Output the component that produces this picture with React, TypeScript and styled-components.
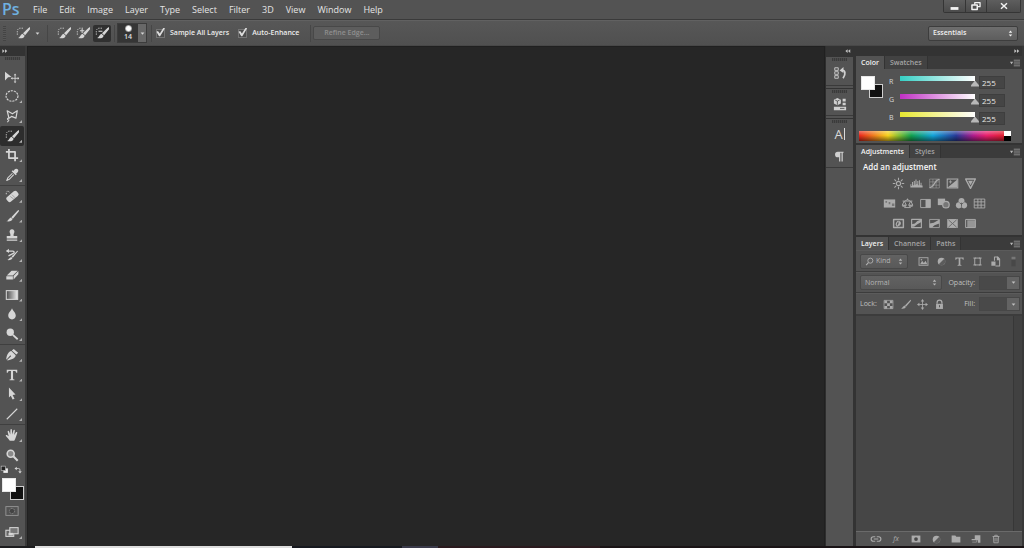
import React from "react";
import styled, { createGlobalStyle, css } from "styled-components";

const Global = createGlobalStyle`
  * { box-sizing: border-box; }
  html, body { margin: 0; background: #262626; }
  body, button, input, select {
    font-family: "Open Sans", "Noto Sans", sans-serif;
    font-size: 7px;
    line-height: 10px;
    color: #d6d6d6;
  }
  button { border: 0; padding: 0; background: none; }
  h2 { margin: 0; }
`;

const Frame = styled.div`
  display: flex;
  flex-direction: column;
  min-height: 100vh;
`;

/* ---------- menu bar ---------- */

const MenuBar = styled.header`
  display: flex;
  height: 20px;
  background: #535353;
  border-bottom: 1px solid #3a3a3a;
`;

const Logo = styled.div`
  width: 27px;
  padding-left: 2px;
  font-size: 16px;
  font-weight: 600;
  line-height: 18px;
  color: #6fb1e0;
`;

const Menus = styled.nav`
  display: flex;
  align-items: center;
  flex: 1;
`;

const MenuItem = styled.button`
  padding: 0 6px;
  font-size: 9px;
  line-height: 12px;
  color: #e4e4e4;
`;

const WindowControls = styled.div`
  display: flex;
  height: 13px;
  margin-right: 3px;
  border: 1px solid #353535;
  border-top: 0;
  border-radius: 0 0 2px 2px;
`;

const WindowButton = styled.button<{ $wide?: boolean }>`
  display: grid;
  place-items: center;
  width: ${(p) => (p.$wide ? 34 : 21)}px;
  background: linear-gradient(#5e5e5e, #4b4b4b);
  color: #f2f2f2;
  & + & { border-left: 1px solid #353535; }
`;

/* ---------- options bar ---------- */

const OptionsBar = styled.div`
  display: flex;
  align-items: center;
  height: 26px;
  padding: 0 6px 0 3px;
  background: linear-gradient(#575757, #505050);
  border-top: 1px solid #616161;
  border-bottom: 1px solid #484848;
`;

const Grip = styled.span`
  width: 3px;
  height: 15px;
  background: repeating-linear-gradient(#444 0 1px, #575757 1px 2px);
`;

const ToolPreset = styled.button`
  display: flex;
  align-items: center;
  gap: 5px;
  margin-left: 10px;
`;

const Separator = styled.span<{ $gap?: number }>`
  width: 1px;
  height: 17px;
  margin: 0 ${(p) => p.$gap ?? 7}px;
  background: #464646;
`;

const ModeButton = styled.button<{ $active?: boolean }>`
  display: grid;
  place-items: center;
  width: 18px;
  height: 17px;
  margin-right: 1px;
  border-radius: 2px;
  ${(p) => p.$active && css`background: #303030;`}
`;

const BrushPicker = styled.button`
  display: flex;
  height: 20px;
  border: 1px solid #3c3c3c;
`;

const BrushPreview = styled.span`
  display: flex;
  flex-direction: column;
  align-items: center;
  width: 20px;
  height: 18px;
  padding-top: 1px;
  background: #353535;
  font-weight: 600;
  line-height: 10px;
  color: #e0e0e0;
`;

const BrushDot = styled.span`
  width: 7px;
  height: 7px;
  flex: none;
  border-radius: 50%;
  background: radial-gradient(#fff 40%, #888 70%);
`;

const BrushArrow = styled.span`
  display: grid;
  place-items: center;
  width: 8px;
  height: 18px;
  background: #686868;
`;

const CheckLabel = styled.label`
  display: flex;
  align-items: center;
  gap: 5px;
  margin-right: 9px;
  font-weight: 600;
  color: #ececec;
`;

const CheckBox = styled.input`
  appearance: none;
  width: 9px;
  height: 9px;
  margin: 0;
  border: 1px solid #747474;
  background: #4c4c4c;
  &:checked::before {
    content: "";
    display: block;
    width: 9px;
    height: 9px;
    margin: -2px 0 0 -1px;
    background: #dcdcdc;
    clip-path: polygon(4% 48%, 22% 38%, 42% 66%, 82% 4%, 100% 8%, 46% 96%, 34% 96%);
  }
`;

const RefineButton = styled.button`
  width: 67px;
  height: 14px;
  border: 1px solid #484848;
  border-radius: 2px;
  background: #5d5d5d;
  font-weight: 600;
  color: #8e8e8e;
`;

const Spacer = styled.span`
  flex: 1;
`;

const SelectShell = styled.span<{ $width: number; $height: number; $dim?: boolean }>`
  display: grid;
  grid-template-columns: 1fr 10px;
  align-items: center;
  width: ${(p) => p.$width}px;
  height: ${(p) => p.$height}px;
  border: 1px solid ${(p) => (p.$dim ? "#484848" : "#3d3d3d")};
  border-radius: 2px;
  background: ${(p) => (p.$dim ? "linear-gradient(#626262, #595959)" : "linear-gradient(#6e6e6e, #5d5d5d)")};
  color: ${(p) => (p.$dim ? "#b4b4b4" : "#f0f0f0")};
  svg { grid-area: 1 / 2; pointer-events: none; }
`;

const SelectField = styled.select<{ $indent?: number; $bold?: boolean }>`
  grid-area: 1 / 1 / 2 / 3;
  appearance: none;
  width: 100%;
  border: 0;
  padding: 0 0 0 ${(p) => p.$indent ?? 4}px;
  background: none;
  font-weight: ${(p) => (p.$bold ? 600 : 400)};
  color: inherit;
`;

const SelectBadge = styled.span`
  grid-area: 1 / 1;
  padding-left: 4px;
  line-height: 0;
`;

/* ---------- work area ---------- */

const WorkArea = styled.div`
  display: flex;
  flex: 1;
`;

const Canvas = styled.main`
  flex: 1;
  background: #262626;
  border: 1px solid #202020;
  border-bottom: 0;
`;

const CollapseStrip = styled.button<{ $right?: boolean }>`
  display: flex;
  align-items: center;
  justify-content: ${(p) => (p.$right ? "flex-end" : "flex-start")};
  flex: none;
  height: 10px;
  width: 100%;
  padding: 0 2px;
  background: #333;
  color: #c4c4c4;
`;

const ToolColumn = styled.aside`
  display: flex;
  flex-direction: column;
  align-items: center;
  width: 27px;
  background: #535353;
  border-right: 2px solid #3a3a3a;
`;

const PanelGrip = styled.span<{ $space?: number }>`
  flex: none;
  width: 15px;
  height: 3px;
  margin: 1px auto ${(p) => p.$space ?? 0}px;
  background: repeating-linear-gradient(90deg, #3b3b3b 0 1px, #4a4a4a 1px 2px);
`;

const ToolGroup = styled.div<{ $height: number }>`
  display: grid;
  grid-auto-rows: 1fr;
  flex: none;
  width: 100%;
  height: ${(p) => p.$height}px;
  & + & { border-top: 1px solid #3f3f3f; }
`;

const ToolButton = styled.button<{ $active?: boolean; $corner?: boolean }>`
  position: relative;
  display: grid;
  place-items: center;
  width: 24px;
  min-height: 18px;
  border-radius: 2px;
  ${(p) => p.$active && css`background: #2d2d2d;`}
  ${(p) =>
    p.$corner &&
    css`
      &::after {
        content: "";
        position: absolute;
        right: 2px;
        bottom: 3px;
        width: 3px;
        height: 3px;
        background: #b0b0b0;
        clip-path: polygon(100% 0, 100% 100%, 0 100%);
      }
    `}
`;

const SwatchTools = styled.div`
  display: flex;
  justify-content: space-between;
  width: 100%;
  padding-right: 3px;
`;

const ColorPair = styled.div<{ $top?: number }>`
  position: relative;
  flex: none;
  width: 22px;
  height: 22px;
  margin-top: ${(p) => p.$top ?? 0}px;
`;

const Chip = styled.button<{ $back?: boolean }>`
  position: absolute;
  width: 14px;
  height: 14px;
  ${(p) =>
    p.$back
      ? css`right: 0; bottom: 0; background: #111; border: 1px solid #cfcfcf;`
      : css`left: 0; top: 0; background: #fff; border: 1px solid #e8e8e8;`}
`;

/* ---------- icon dock ---------- */

const Dock = styled.aside`
  display: flex;
  flex-direction: column;
  width: 30px;
  background: #535353;
  border-left: 1px solid #2e2e2e;
  border-right: 2px solid #333;
`;

const DockGroup = styled.div<{ $height: number }>`
  display: flex;
  flex-direction: column;
  height: ${(p) => p.$height}px;
  border-top: 1px solid #333;
  border-bottom: 1px solid #3a3a3a;
  & + & { margin-top: 2px; }
`;

const DockButton = styled.button`
  display: grid;
  place-items: center;
  flex: 1;
  color: #d0d0d0;
`;

const CharacterMark = styled.span`
  padding-right: 1px;
  border-right: 1px solid #dadada;
  font-size: 13px;
  line-height: 12px;
  color: #dadada;
`;

/* ---------- panels ---------- */

const Panels = styled.aside`
  display: flex;
  flex-direction: column;
  width: 169px;
  background: #333;
  border-right: 2px solid #383838;
`;

const Panel = styled.section<{ $grow?: boolean }>`
  display: flex;
  flex-direction: column;
  flex: ${(p) => (p.$grow ? "1" : "none")};
  margin-left: 1px;
  background: #535353;
  & + & { margin-top: 2px; }
`;

const TabBar = styled.div`
  display: flex;
  height: 13px;
  background: #3b3b3b;
`;

const Tab = styled.button<{ $active?: boolean }>`
  padding: 0 5px 0 5px;
  border-right: 1px solid #333;
  background: ${(p) => (p.$active ? "#535353" : "#424242")};
  font-weight: 600;
  color: ${(p) => (p.$active ? "#f2f2f2" : "#a4a4a4")};
`;

const PanelMenu = styled.button`
  margin-left: auto;
  padding-right: 2px;
  line-height: 0;
  color: #b8b8b8;
`;

const ColorBody = styled.div`
  display: grid;
  grid-template-columns: 22px 1fr;
  column-gap: 6px;
  height: 74px;
  padding: 4px 11px 2px 5px;
`;

const Channels = styled.div`
  display: grid;
  grid-auto-rows: 18px;
  align-items: center;
`;

const ChannelRow = styled.label`
  display: grid;
  grid-template-columns: 11px 79px 26px;
  align-items: center;
  color: #d8d8d8;
`;

const ChannelSlider = styled.input<{ $from: string }>`
  appearance: none;
  width: 79px;
  height: 12px;
  margin: 0 0 1px;
  background: linear-gradient(90deg, ${(p) => p.$from}, #fff) no-repeat 0 0 / 75px 5px;
  &::-webkit-slider-runnable-track { height: 12px; }
  &::-webkit-slider-thumb {
    appearance: none;
    width: 8px;
    height: 6px;
    margin-top: 5px;
    background: #b8b8b8;
    clip-path: polygon(50% 0, 100% 80%, 100% 100%, 0 100%, 0 80%);
  }
`;

const ChannelValue = styled.input`
  width: 26px;
  height: 13px;
  padding: 0 0 0 2px;
  border: 1px solid #3e3e3e;
  background: #454545;
  font-size: 8px;
  color: #e6e6e6;
`;

const Spectrum = styled.div`
  grid-column: 1 / 3;
  align-self: end;
  display: grid;
  grid-template-columns: 1fr 7px;
  height: 10px;
  margin-left: -2px;
`;

const Hues = styled.span`
  grid-row: 1 / 3;
  background:
    linear-gradient(rgba(255, 255, 255, 0.35), rgba(255, 255, 255, 0) 45%, rgba(0, 0, 0, 0.5)),
    linear-gradient(90deg, #e8251c, #f5d21c 20%, #8cc030 27%, #12a04e 36%, #12a3d8 51%, #283a98 67%, #b01c8c 79%, #e8206c 88%, #e02030);
`;

const EndStop = styled.span<{ $dark?: boolean }>`
  background: ${(p) => (p.$dark ? "#000" : "#fff")};
`;

const AdjustBody = styled.div`
  height: 77px;
  padding: 3px 7px;
`;

const AdjustTitle = styled.h2`
  font-size: 8px;
  font-weight: 600;
  line-height: 12px;
  color: #f8f8f8;
`;

const IconRow = styled.div`
  display: flex;
  justify-content: center;
  align-items: center;
  gap: 4px;
  height: 20px;
  margin-left: -10px;
`;

const IconButton = styled.button`
  display: grid;
  place-items: center;
  width: 14px;
  height: 14px;
  color: #ababab;
`;

const LayerRow = styled.div<{ $height: number }>`
  display: flex;
  align-items: center;
  height: ${(p) => p.$height}px;
  padding: 0 2px 0 4px;
  border-bottom: 1px solid #3c3c3c;
  border-top: 1px solid #5b5b5b;
  color: #c0c0c0;
`;

const FilterIcons = styled.div`
  display: flex;
  gap: 4px;
  margin-left: 8px;
`;

const LockIcons = styled.div`
  display: flex;
  gap: 3px;
  margin-left: 5px;
`;

const FieldLabel = styled.label`
  display: flex;
  align-items: center;
  gap: 4px;
  margin-left: auto;
`;

const AmountShell = styled.span`
  display: grid;
  grid-template-columns: 27px 12px;
  height: 14px;
  border: 1px solid #474747;
`;

const AmountInput = styled.input`
  width: 27px;
  height: 12px;
  border: 0;
  background: #494949;
`;

const AmountArrow = styled.span`
  display: grid;
  place-items: center;
  background: #636363;
`;

const LayerList = styled.div`
  display: grid;
  grid-template-columns: 1fr 9px;
  flex: 1;
  background: #464646;
  border-top: 1px solid #3c3c3c;
  border-bottom: 1px solid #6a6a6a;
`;

const ScrollTrack = styled.span`
  grid-column: 2;
  background: #414141;
  border-left: 1px solid #373737;
`;

const LayerFooter = styled.div`
  display: flex;
  align-items: center;
  gap: 6px;
  height: 14px;
  padding-left: 13px;
`;

const DesktopEdge = styled.footer`
  height: 2px;
  background: linear-gradient(
    90deg,
    #1c1c1e 35px, #dedede 35px 292px, #17191f 292px 402px, #3a3a4a 402px 438px, #2a1a1e 438px 600px, #1a1416 600px
  );
`;

/* ---------- drawings ---------- */

type Drawing = React.ReactNode;

const line = (d: string, width = 1.2) => (
  <path d={d} fill="none" stroke="currentColor" strokeWidth={width} strokeLinejoin="round" />
);
const solid = (d: string) => <path d={d} fill="currentColor" />;

const brushStroke = solid("M16 1.200c.8.8.6 1.600.1 2.300L10.400 10.600 8 8.400 14.200 2.200zM7.400 8.800l2.500 2.300c-.4 2.600-3.400 3.400-7.600 2.600 2.500-.5 2.400-3.800 5.100-4.900z");

const quickSelect = (
  <>
    <path d="M1.500 10V6Q2 2.500 5 2.500H9" fill="none" stroke="currentColor" strokeWidth="1" strokeDasharray="1.500 1.200" />
    {brushStroke}
  </>
);

const art: Record<string, Drawing> = {
  move: (
    <>
      {solid("M0 2l7.500 6-4 .4L0 12z")}
      {line("M11.500 5.500v8M7.500 9.500h8", 1)}
      {solid("M11.500 4l1.500 2h-3zM11.500 15l1.500-2h-3zM6.500 9.500l2-1.500v3zM16.500 9.500l-2-1.500v3z")}
    </>
  ),
  ellipse: <ellipse cx="8" cy="8" rx="6.800" ry="6" fill="none" stroke="currentColor" strokeWidth="1.300" strokeDasharray="2.400 1.100" />,
  lasso: <>{line("M4.500 10.500L2.500 2l6 3.500L14 2l-1.500 8.500-5-2-3 2z", 1.4)}{line("M4.500 10.500c-2-.5-2.500 2 0 2-.5 1-1 2-2 2.500", 1.2)}</>,
  quick: quickSelect,
  quickAdd: <>{quickSelect}{line("M7 3v5M4.500 5.500h5", 1.2)}</>,
  quickSubtract: <>{quickSelect}{line("M4 6h4.500", 1.2)}</>,
  crop: line("M4.500 1v10.500H15M1 4.500h10.500V15", 2),
  dropper: <>{solid("M14.500 1.500c1.200 1.200.8 2.800-.5 3.800l-1.300 1 .8.8-1.300 1.300-4.600-4.600L8.900 2.500l.8.8 1-1.200c1-1.300 2.600-1.800 3.800-.6z")}{line("M8.500 6L3.200 11.300 2 14.200l2.800-1.300L10 7.600", 1.2)}</>,
  heal: <>
    <path d="M5 3.500C3 1.500 1 3 1.500 6" fill="none" stroke="currentColor" strokeWidth="1" strokeDasharray="1.500 1" />
    <rect x="1" y="5" width="15" height="7" rx="2.500" transform="rotate(-40 8.500 8.500)" fill="currentColor" />
    <path d="M6 8.500l4 3M8 6.500l3.500 3.500" stroke="#8a8a8a" strokeWidth=".8" />
  </>,
  brush: solid("M15.500 1.200c.8.7.6 1.300 0 2L9 11 7.200 9.400 14.200 2zM6.600 9.600l2 1.800c-.4 2.400-3.400 3.200-7.100 2.600 2.400-.6 2.700-3.400 5.100-4.400z"),
  stamp: solid("M8 1.500a2.800 2.800 0 012.400 4.200C9.700 7 9.700 8 9.900 9H14v3H2V9h4.100c.2-1 .2-2-.5-3.300A2.800 2.800 0 018 1.500zM2 13h12v1.500H2z"),
  history: <>{solid("M15 3.500L9 11 7.500 9.800 14 3zM7 10.200l1.500 1.300c-.5 2-3 2.700-6 2.300 2-.5 2.500-3 4.500-3.600z")}{line("M2 3.500h7c2 0 2 2.500 0 3L4 9", 1.5)}{solid("M4.500.8v5L1 3.400z")}</>,
  eraser: <>{solid("M7.500 3h7L9 8.500H2zM9.800 9.200L15.300 3.500V7L9.800 13zM1.500 9.300H9V13H1.500z")}</>,
  gradient: <>
    <defs><linearGradient id="toolFade"><stop stopColor="#4a4a4a" /><stop offset="1" stopColor="#eee" /></linearGradient></defs>
    <rect x="1.500" y="3" width="13" height="10" fill="url(#toolFade)" stroke="currentColor" strokeWidth="1.200" />
  </>,
  blur: solid("M8 1.500c1 3 4.300 4.800 4.300 8.300A4.300 4.300 0 018 14.300a4.300 4.300 0 01-4.300-4.500C3.700 6.300 7 4.500 8 1.500z"),
  dodge: <><circle cx="6" cy="6" r="4.200" fill="currentColor" />{line("M9 9l5.500 5", 2)}</>,
  pen: <>{solid("M10 1l5 4.500-2 2L7.800 2.800zM7.200 3.500l5 4.800c-.2 3-3.500 4.800-9.200 6l-.6-.5L7 9.300 6.200 8.400 1.800 13l-.4-.5c.8-5 2.800-8.700 5.800-9z")}</>,
  type: solid("M2 2h12v3.500h-1.200c-.2-1.500-.8-2-2-2H9.200v8.600c0 .9.500 1 1.600 1.100V14H5.200v-.8c1.100-.1 1.600-.2 1.600-1.100V3.500H5.200c-1.200 0-1.800.5-2 2H2z"),
  arrow: solid("M4.500.500l7.500 8-3.300.5 2.200 4.400-2.200 1-2.100-4.500-2.100 2z"),
  line: line("M2 14L14 2", 1.3),
  hand: solid("M5.500 14.500C4 12.500 2.500 10.500 1 9c-.6-1 .8-1.500 1.500-.8L4.200 9.500 3 4.200c0-1.100 1.300-1.300 1.700-.2L6 7.500 6.200 2c.1-1.200 1.600-1.200 1.700 0l.3 5.300 1.500-4.700c.4-1.100 1.700-.8 1.600.3l-.8 5 2-3c.6-.9 1.900-.3 1.500.8-.9 2.600-1.500 5-2.500 7.200l-1 1.600z"),
  zoom: <><circle cx="6.500" cy="6.500" r="4" fill="#8a8a8a" stroke="currentColor" strokeWidth="1.800" />{line("M9.500 9.500l5 5", 2.4)}</>,
  mask: <><rect x="1" y="3" width="14" height="10" fill="none" stroke="#999" /><circle cx="8" cy="8" r="3" fill="#444" stroke="#999" strokeDasharray="1 .8" /></>,
  screen: <><rect x="1" y="6" width="9" height="7" fill="#666" stroke="currentColor" strokeWidth="1.200" /><rect x="5.500" y="3" width="9.500" height="7" fill="#777" stroke="currentColor" strokeWidth="1.200" />{solid("M4 9h5v3H4z")}</>,
  reset: <><rect x="6" y="6" width="8" height="8" fill="#eee" /><rect x="2" y="2" width="8" height="8" fill="#222" stroke="#ddd" /></>,
  swap: <>{line("M4 5h5.500Q12 5 12 8v3", 1.6)}{solid("M1 5l4.500-3.500v7zM12 15l-3.500-4.500h7z")}</>,
  panelHistory: <>{line("M2 2h4v3H2zM2 6.500h4v3H2zM2 11h4v3H2z", 1)}{line("M10 5c4-1 5 4 1.500 9", 2)}{solid("M7.500 5L12 1v7z")}</>,
  properties: <>{solid("M1 3l4-2 4 2v4.500L5 9.500l-4-2zM11 2h3.500v3H11zM11 6.500h3.500v3H11zM1 11h14v4H1z")}<path d="M5 4.500V9M2.500 3.500L5 4.700l2.500-1.200M8 13h5" stroke="#535353" fill="none" /></>,
  paragraph: solid("M6 2h7v1.500h-1V14h-1.500V3.500H9V14H7.500V9H6a3.500 3.500 0 010-7z"),
  sun: <><circle cx="8" cy="8" r="2.600" fill="none" stroke="currentColor" strokeWidth="1.400" />{line("M8 1v3M8 12v3M1 8h3M12 8h3M3 3l2 2M11 11l2 2M13 3l-2 2M5 11l-2 2", 1.3)}</>,
  levels: solid("M.5 13V9h1.200v2h.8V6h1.300v4h.9V5h1.200v4.500h.8V3H8v6h1V5h1.200v5h.8V4h1.200v6h.8V7h1.200v3.500h1.300V13z"),
  curves: <>{line("M2 2.500h12v11H2zM6 2.500v11M10 2.500v11M2 6h12M2 10h12", 0.6)}{line("M2 13C9 12 7 4 14 3", 1.6)}</>,
  exposure: <><rect x="1.500" y="2.500" width="13" height="11" fill="none" stroke="currentColor" strokeWidth="1.300" />{solid("M2 13L14 3v10z")}{line("M3.500 6h4M5.500 4v4", 1)}</>,
  vibrance: <>{line("M2 2.500h12L8 14z", 1.7)}{solid("M5 4.500h6L8 10z")}</>,
  hue: <>{solid("M1 3h14v10H1z")}<path d="M3 5h2v2H3zM7 6h2v3H7zM11 8h3v3h-3z" fill="#777" /></>,
  balance: <>{line("M8 2v2M2 5h12M4 5L1.500 10h5zM12 5l-2.500 5h5zM4 13h8M5 5l3-2 3 2", 1.2)}{solid("M1 10h6l-1 2H2zM9 10h6l-1 2h-4z")}</>,
  blackWhite: <>{line("M2 3h12v10H2z", 1.1)}{solid("M8 3h6v10H8z")}</>,
  photo: <>{solid("M1 2h9v8H1z")}<circle cx="11" cy="9.500" r="4" fill="#777" stroke="currentColor" strokeWidth="1.500" /></>,
  mixer: <><circle cx="8" cy="5" r="3.700" fill="currentColor" /><circle cx="4.800" cy="10.300" r="3.700" fill="currentColor" /><circle cx="11.200" cy="10.300" r="3.700" fill="currentColor" /><path d="M8 7v5M8 9L5.500 7M8 9l2.500-2" stroke="#555" /></>,
  lookup: line("M1.500 2.500h13v11h-13zM6 2.500v11M10 2.500v11M1.500 6h13M1.500 10h13", 1.1),
  invert: <>{line("M2 3h12v10H2z", 1.8)}{solid("M8 5c3 0 4 3 2 5l-5 3L8 8z")}{line("M6 11c-2-2 0-5 2-6", 1.5)}</>,
  posterize: <>{line("M2 3h12v10H2z", 1.4)}{solid("M2 9l4-1 3-3 5-2v3L9 9l-4 3H2z")}</>,
  threshold: <>{line("M2 3h12v10H2z", 1)}{solid("M2 8l5-1 7-4v5l-6 2-3 3H2z")}</>,
  selective: <>{solid("M1.500 2.500h13v11h-13z")}<path d="M3 3.500L8 8l5-4.500M3 12.500L8 8l5 4.500" stroke="#606060" fill="none" /></>,
  map: <>{line("M2 3h12v10H2z", 1.2)}<path d="M4 4h10v9H4z" fill="currentColor" opacity=".75" /></>,
  image: <><rect x="1.500" y="2.500" width="13" height="11" fill="none" stroke="currentColor" strokeWidth="1.300" />{solid("M3 12l3-5 2.500 3L11 7l2.500 5z")}<circle cx="5" cy="5.500" r="1.200" fill="currentColor" /></>,
  halfCircle: <><circle cx="8" cy="8" r="5.500" fill="currentColor" /><path d="M8 8l4-4a5.500 5.500 0 01-8 8z" fill="#5c5c5c" /></>,
  shape: line("M4 3h8v10H4zM2 3h4M10 3h4M2 13h4M10 13h4", 1.4),
  smart: <>{line("M6.500 7V1.500h5L14 4.500v10H8", 1.5)}{solid("M2 8h6v6H2zM10 1h1.500L14 4v2h-4z")}</>,
  toggle: <><rect x="5" y="1" width="6" height="14" fill="#484848" /><path d="M5 1h6v4H5z" fill="#777" /></>,
  checker: <>{line("M1.500 2h13v12h-13z", 1)}{solid("M2 2h4v4H2zM10 2h4v4h-4zM6 6h4v4H6zM2 10h4v4H2zM10 10h4v4h-4z")}</>,
  cross: <>{line("M8 3v10M3 8h10", 1.2)}{solid("M8 0l2.500 3.500h-5zM8 16l2.500-3.500h-5zM0 8l3.500-2.500v5zM16 8l-3.500-2.500v5z")}</>,
  lock: <>{line("M4.500 7V5a3.500 3.500 0 017 0v2", 1.8)}{solid("M3 7h10v7.500H3z")}<path d="M8 9v3" stroke="#555" strokeWidth="1.500" /></>,
  chain: <>{line("M7 5H4.500a3 3 0 000 6H7M9 5h2.500a3 3 0 010 6H9M5 8h6", 1.5)}</>,
  addMask: <>{solid("M1 2.500h14v11H1z")}<circle cx="8" cy="8" r="3" fill="#484848" /></>,
  folder: solid("M1 2.500h6l1.500 2H15v9H1z"),
  newLayer: <>{solid("M6 2h9v12h-4v-4H1V8h5z")}{line("M2 13h7v-3", 1)}</>,
  trash: line("M2.500 4h11M6 4V2h4v2M4 4l.5 10h7L12 4M6.500 6v6M9.500 6v6", 1.3),
  search: <><circle cx="9.500" cy="6.500" r="4.500" fill="none" stroke="currentColor" strokeWidth="1.500" />{line("M6 10l-4 4.500", 1.8)}</>,
  updown: solid("M8 1l4 5H4zM8 15l4-5H4z"),
  down: solid("M2 5h12L8 12z"),
  rewind: solid("M1 3v10l6-5zM8 3v10l6-5z"),
  rewindLeft: solid("M7 3v10L1 8zM14 3v10L8 8z"),
  menu: <>{solid("M0 6h5L2.500 10z")}{line("M6 3.500h10M6 6.500h10M6 9.500h10M6 12.500h10", 1)}</>,
  minimize: solid("M1 9h14v5H1z"),
  restore: <>{line("M6 6V2.500h8.500V9H11", 2)}{line("M1.500 6.500H10v7H1.500z", 2.4)}</>,
  close: line("M2 2.500l12 11M14 2.500l-12 11", 3),
};

function Icon({ name, size = 14 }: { name: string; size?: number }) {
  return (
    <svg width={size} height={size} viewBox="0 0 16 16" aria-hidden="true">
      {art[name]}
    </svg>
  );
}

/* ---------- page ---------- */

const menus = ["File", "Edit", "Image", "Layer", "Type", "Select", "Filter", "3D", "View", "Window", "Help"];

const toolGroups = [
  { height: 118, tools: ["move", "ellipse", "lasso", "quick", "crop", "dropper"] },
  { height: 159, tools: ["heal", "brush", "stamp", "history", "eraser", "gradient", "blur", "dodge"] },
  { height: 80, tools: ["pen", "type", "arrow", "line"] },
  { height: 41, tools: ["hand", "zoom"] },
];

const adjustments = [
  ["sun", "levels", "curves", "exposure", "vibrance"],
  ["hue", "balance", "blackWhite", "photo", "mixer", "lookup"],
  ["invert", "posterize", "threshold", "selective", "map"],
];

const channels = [
  { name: "R", from: "#35cfc4" },
  { name: "G", from: "#c02fc4" },
  { name: "B", from: "#e8e830" },
];

function Tabs({ names }: { names: string[] }) {
  return (
    <TabBar>
      {names.map((name, i) => (
        <Tab key={name} $active={i === 0}>{name}</Tab>
      ))}
      <PanelMenu aria-label="Panel menu"><Icon name="menu" size={10} /></PanelMenu>
    </TabBar>
  );
}

function Amount({ label }: { label: string }) {
  return (
    <FieldLabel>
      {label}
      <AmountShell>
        <AmountInput />
        <AmountArrow><Icon name="down" size={5} /></AmountArrow>
      </AmountShell>
    </FieldLabel>
  );
}

export default function App() {
  return (
    <Frame>
      <Global />
      <MenuBar>
        <Logo>Ps</Logo>
        <Menus>
          {menus.map((m) => <MenuItem key={m}>{m}</MenuItem>)}
        </Menus>
        <WindowControls>
          <WindowButton aria-label="Minimize"><Icon name="minimize" size={9} /></WindowButton>
          <WindowButton aria-label="Restore"><Icon name="restore" size={10} /></WindowButton>
          <WindowButton $wide aria-label="Close"><Icon name="close" size={8} /></WindowButton>
        </WindowControls>
      </MenuBar>

      <OptionsBar>
        <Grip />
        <ToolPreset aria-label="Tool preset"><Icon name="quick" /><Icon name="down" size={5} /></ToolPreset>
        <Separator />
        <ModeButton aria-label="New selection"><Icon name="quick" /></ModeButton>
        <ModeButton aria-label="Add to selection"><Icon name="quickAdd" /></ModeButton>
        <ModeButton $active aria-label="Subtract from selection"><Icon name="quickSubtract" /></ModeButton>
        <Separator $gap={2} />
        <BrushPicker aria-label="Brush picker">
          <BrushPreview><BrushDot />14</BrushPreview>
          <BrushArrow><Icon name="down" size={5} /></BrushArrow>
        </BrushPicker>
        <Separator $gap={4} />
        <CheckLabel><CheckBox type="checkbox" defaultChecked />Sample All Layers</CheckLabel>
        <CheckLabel><CheckBox type="checkbox" defaultChecked />Auto-Enhance</CheckLabel>
        <Separator $gap={2} />
        <RefineButton>Refine Edge...</RefineButton>
        <Spacer />
        <SelectShell $width={90} $height={15}>
          <SelectField $bold aria-label="Workspace"><option>Essentials</option></SelectField>
          <Icon name="updown" size={7} />
        </SelectShell>
      </OptionsBar>

      <WorkArea>
        <ToolColumn>
          <CollapseStrip aria-label="Expand tools"><Icon name="rewind" size={6} /></CollapseStrip>
          <PanelGrip $space={7} />
          {toolGroups.map((group) => (
            <ToolGroup key={group.tools[0]} $height={group.height}>
              {group.tools.map((tool) => (
                <ToolButton
                  key={tool}
                  aria-label={tool}
                  $active={tool === "quick"}
                  $corner={tool !== "move" && tool !== "zoom"}
                >
                  <Icon name={tool} />
                </ToolButton>
              ))}
            </ToolGroup>
          ))}
          <SwatchTools>
            <button aria-label="Default colors"><Icon name="reset" size={9} /></button>
            <button aria-label="Swap colors"><Icon name="swap" size={8} /></button>
          </SwatchTools>
          <ColorPair $top={1}>
            <Chip $back aria-label="Background color" />
            <Chip aria-label="Foreground color" />
          </ColorPair>
          <ToolGroup $height={42}>
            <ToolButton aria-label="Quick mask"><Icon name="mask" /></ToolButton>
            <ToolButton aria-label="Screen mode" $corner><Icon name="screen" /></ToolButton>
          </ToolGroup>
        </ToolColumn>

        <Canvas />

        <Dock>
          <CollapseStrip $right aria-label="Expand dock"><Icon name="rewindLeft" size={6} /></CollapseStrip>
          <DockGroup $height={30}>
            <PanelGrip />
            <DockButton aria-label="History"><Icon name="panelHistory" /></DockButton>
          </DockGroup>
          <DockGroup $height={28}>
            <PanelGrip />
            <DockButton aria-label="Properties"><Icon name="properties" /></DockButton>
          </DockGroup>
          <DockGroup $height={50}>
            <PanelGrip />
            <DockButton aria-label="Character"><CharacterMark>A</CharacterMark></DockButton>
            <DockButton aria-label="Paragraph"><Icon name="paragraph" size={13} /></DockButton>
          </DockGroup>
        </Dock>

        <Panels>
          <CollapseStrip $right aria-label="Collapse panels"><Icon name="rewind" size={6} /></CollapseStrip>
          <Panel>
            <Tabs names={["Color", "Swatches"]} />
            <ColorBody>
              <ColorPair $top={3}>
                <Chip $back aria-label="Background color" />
                <Chip aria-label="Foreground color" />
              </ColorPair>
              <Channels>
                {channels.map((c) => (
                  <ChannelRow key={c.name}>
                    {c.name}
                    <ChannelSlider type="range" min={0} max={255} defaultValue={255} $from={c.from} />
                    <ChannelValue defaultValue="255" aria-label={`${c.name} value`} />
                  </ChannelRow>
                ))}
              </Channels>
              <Spectrum><Hues /><EndStop /><EndStop $dark /></Spectrum>
            </ColorBody>
          </Panel>

          <Panel>
            <Tabs names={["Adjustments", "Styles"]} />
            <AdjustBody>
              <AdjustTitle>Add an adjustment</AdjustTitle>
              {adjustments.map((row) => (
                <IconRow key={row[0]}>
                  {row.map((name) => (
                    <IconButton key={name} aria-label={name}><Icon name={name} size={13} /></IconButton>
                  ))}
                </IconRow>
              ))}
            </AdjustBody>
          </Panel>

          <Panel $grow>
            <Tabs names={["Layers", "Channels", "Paths"]} />
            <LayerRow $height={22}>
              <SelectShell $width={52} $height={15} $dim>
                <SelectBadge><Icon name="search" size={9} /></SelectBadge>
                <SelectField $indent={15} aria-label="Filter kind"><option>Kind</option></SelectField>
                <Icon name="updown" size={7} />
              </SelectShell>
              <FilterIcons>
                {["image", "halfCircle", "type", "shape", "smart", "toggle"].map((name) => (
                  <IconButton key={name} aria-label={name}><Icon name={name} size={11} /></IconButton>
                ))}
              </FilterIcons>
            </LayerRow>
            <LayerRow $height={21}>
              <SelectShell $width={82} $height={15} $dim>
                <SelectField aria-label="Blend mode"><option>Normal</option></SelectField>
                <Icon name="updown" size={7} />
              </SelectShell>
              <Amount label="Opacity:" />
            </LayerRow>
            <LayerRow $height={22}>
              Lock:
              <LockIcons>
                {["checker", "brush", "cross", "lock"].map((name) => (
                  <IconButton key={name} aria-label={name}><Icon name={name} size={11} /></IconButton>
                ))}
              </LockIcons>
              <Amount label="Fill:" />
            </LayerRow>
            <LayerList><ScrollTrack /></LayerList>
            <LayerFooter>
              <IconButton aria-label="Link layers"><Icon name="chain" size={12} /></IconButton>
              <IconButton aria-label="Layer style"><i>fx</i></IconButton>
              <IconButton aria-label="Add mask"><Icon name="addMask" size={10} /></IconButton>
              <IconButton aria-label="New adjustment"><Icon name="halfCircle" size={11} /></IconButton>
              <IconButton aria-label="New group"><Icon name="folder" size={10} /></IconButton>
              <IconButton aria-label="New layer"><Icon name="newLayer" size={10} /></IconButton>
              <IconButton aria-label="Delete layer"><Icon name="trash" size={10} /></IconButton>
            </LayerFooter>
          </Panel>
        </Panels>
      </WorkArea>
      <DesktopEdge />
    </Frame>
  );
}
